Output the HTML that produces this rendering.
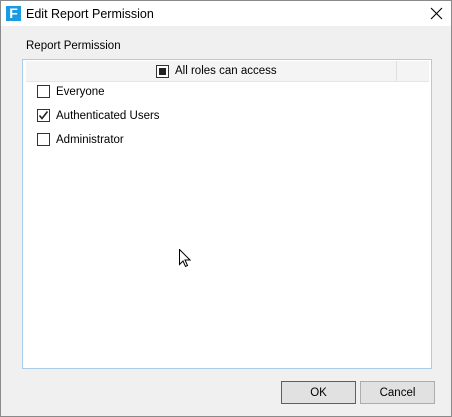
<!DOCTYPE html><html><head><style>
body{margin:0;width:452px;height:417px;overflow:hidden;font-family:"Liberation Sans",sans-serif;font-size:11.5px;color:#000}
.win{position:absolute;left:0;top:0;width:450px;height:415px;border:1px solid #8a8a8a;background:#f0f0f0}
.title{position:absolute;left:0;top:0;width:450px;height:25px;background:#fff}
.abs{position:absolute}
.cb{position:absolute;left:36px;width:11px;height:11px;border:1px solid #333;background:#fff}
.lbl{position:absolute;left:55px}
.btn{position:absolute;top:380px;height:21px;width:73px;border:1px solid #adadad;background:#e1e1e1;text-align:center;line-height:22px}
</style></head><body>
<div class="win">
<div class="title">
<div class="abs" style="left:5px;top:5px;width:15px;height:15px;background:#1e9be0;color:#fff;font-weight:bold;font-size:14px;line-height:15px;text-align:center">F</div>
<div class="abs" style="left:25px;top:6px;font-size:12.5px">Edit Report Permission</div>
<svg class="abs" style="left:429px;top:6px" width="13" height="13"><path d="M1 1L12 12M12 1L1 12" stroke="#000" stroke-width="1.1"/></svg>
</div>
<div class="abs" style="left:25px;top:39px">Report Permission</div>
<div class="abs" style="left:21px;top:58px;width:408px;height:308px;border:1px solid #a9cde9;background:#fff">
<div class="abs" style="left:3px;top:1px;width:403px;height:20px;background:#f4f4f4;border-bottom:1px solid #e6e6e6"></div>
<div class="abs" style="left:373px;top:1px;width:1px;height:20px;background:#e0e0e0"></div>
<div class="abs" style="left:133px;top:5px;width:11px;height:11px;border:1px solid #333;background:#fff"><div style="margin:2px;width:7px;height:7px;background:#222"></div></div>
<div class="abs" style="left:152px;top:5px">All roles can access</div>
</div>
<div class="cb" style="top:84px"></div><div class="lbl" style="top:85px">Everyone</div>
<div class="cb" style="top:108px"><svg width="11" height="11" style="display:block"><path d="M1.5 5.5L4 8.5L9.5 1.5" stroke="#222" stroke-width="1.6" fill="none"/></svg></div><div class="lbl" style="top:109px">Authenticated Users</div>
<div class="cb" style="top:132px"></div><div class="lbl" style="top:133px">Administrator</div>
<svg class="abs" style="left:178px;top:248px" width="12" height="19"><path d="M0.5 0.5L0.5 15.5L4 12L6.5 17.5L8.5 16.5L6 11L11 11Z" fill="#fff" stroke="#000"/></svg>
<div class="btn" style="left:280px;border-color:#0078d7">OK</div>
<div class="btn" style="left:359px">Cancel</div>
</div>
</body></html>
